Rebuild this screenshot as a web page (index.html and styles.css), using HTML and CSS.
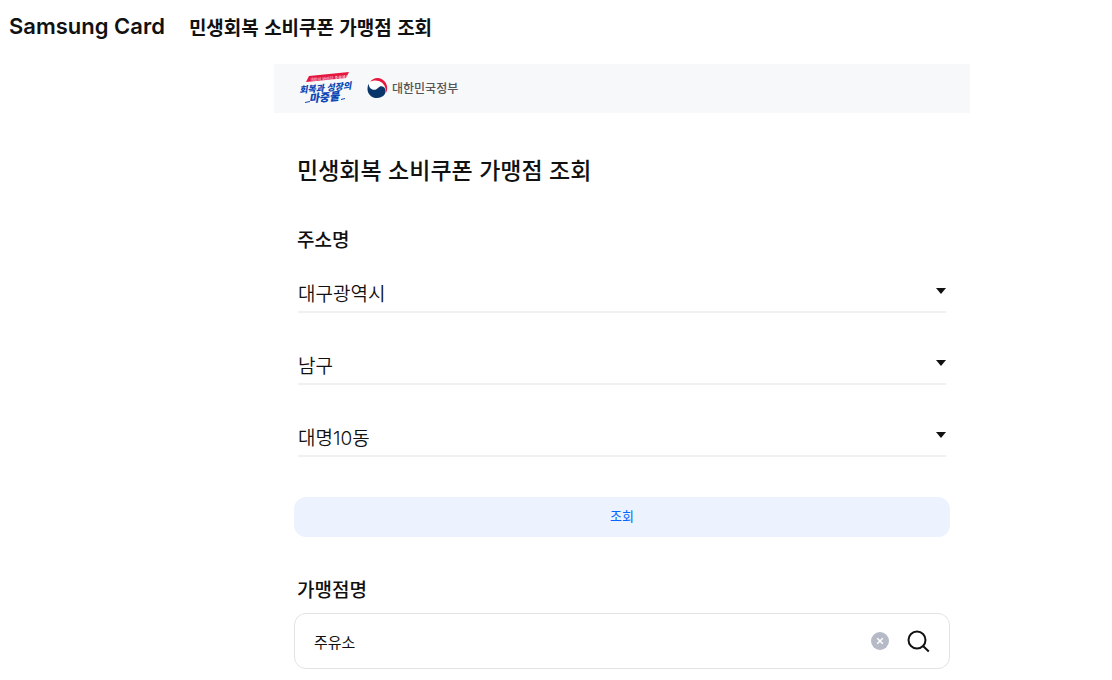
FILE: index.html
```html
<!DOCTYPE html>
<html lang="ko">
<head>
    <meta charset="UTF-8">
    <meta name="viewport" content="width=device-width, initial-scale=1.0">
    <title>민생회복 소비쿠폰 가맹점 조회</title>
    <link rel="stylesheet" href="styles.css">
</head>
<body>
    <header class="header">
        <a class="brand" href="#">Samsung Card</a>
        <h1 class="header-title">민생회복 소비쿠폰 가맹점 조회</h1>
    </header>

    <main class="container">
        <!-- 정부 로고 -->
        <div class="gov-banner">
            <svg class="slogan" width="58" height="36" viewBox="0 0 58 36">
                <path d="M11 6L51 2L48 8L8 12Z" fill="#e5173f"/>
                <g transform="rotate(-5 28 17)">
                    <text class="slogan-small" x="13" y="10">국민이 바라던 추경예산</text>
                    <text class="slogan-text" x="1" y="21">회복과 성장의</text>
                    <text class="slogan-text slogan-bottom" x="10" y="31">마중물</text>
                </g>
                <path d="M7 32.500L12 31.500M43 29.500L47 28.500" stroke="#0b47b5" stroke-width="1"/>
            </svg>
            <svg class="gov-mark" width="21" height="22" viewBox="0 0 21 22">
                <path d="M2 6C4.500 1.500 9 0 13 1.200C18.500 2.800 21.500 8 20 14C19.500 16 18.800 17.300 17.800 18.300C19.300 14 18.500 8.500 14.800 7.800C11 7.200 10.500 10.500 7.500 11.200C4 12 1.500 9.500 2 6Z" fill="#fff"/>
                <path d="M3 5C6 0.800 11 0 15 2.200C20 5 21.500 11 19 16C19.200 10 16.500 5.800 12.500 4.300C9 3 5.500 3.300 3 5Z" fill="#e5173f"/>
                <path d="M1.800 6.500C-0.300 10.500 0 15.500 3.300 18.500C7.500 22.500 14.500 21.700 17.700 17.300C19.800 13.500 18 9.500 14.500 9.300C11.500 9.300 11 12 8.500 12.700C4.500 13.600 1.500 10.500 1.800 6.500Z" fill="#08366b"/>
            </svg>
            <span class="gov-name">대한민국정부</span>
        </div>

        <form class="search-form" id="searchForm">
            <h2 class="page-title">민생회복 소비쿠폰 가맹점 조회</h2>

            <!-- 주소 선택 -->
            <label class="label" for="sido">주소명</label>
            <div class="address">
                <select class="select" id="sido" name="sido">
                    <option>대구광역시</option>
                </select>
                <select class="select" name="sigungu" aria-label="시군구">
                    <option>남구</option>
                </select>
                <select class="select" name="dong" aria-label="읍면동">
                    <option>대명10동</option>
                </select>
            </div>

            <button class="submit" type="submit">조회</button>

            <!-- 가맹점명 검색 -->
            <label class="label" for="store">가맹점명</label>
            <div class="search-box">
                <input class="search-input" type="text" id="store" name="store" value="주유소">
                <button class="icon-button" type="button" id="clear" aria-label="지우기">
                    <svg width="18" height="18" viewBox="0 0 18 18">
                        <circle cx="9" cy="9" r="9" fill="#b5bac6"/>
                        <path d="M6.200 6.200L11.800 11.800M11.800 6.200L6.200 11.800" stroke="#fff" stroke-width="1.500"/>
                    </svg>
                </button>
                <button class="icon-button" type="submit" aria-label="검색">
                    <svg width="24" height="24" viewBox="0 0 24 24" fill="none" stroke="#111" stroke-width="2">
                        <circle cx="10" cy="11" r="8.500"/>
                        <path d="M16 17L21.800 22.500"/>
                    </svg>
                </button>
            </div>
        </form>
    </main>

    <script>
        document.getElementById('searchForm').addEventListener('submit', (e) => {
            e.preventDefault();
        });

        // 검색어 지우기
        document.getElementById('clear').addEventListener('click', () => {
            document.getElementById('store').value = '';
        });
    </script>
</body>
</html>
```

FILE: styles.css
```css
* {
    box-sizing: border-box;
}

body {
    margin: 0;
    background-color: #fff;
    color: #111;
    font-family: "Noto Sans CJK KR", sans-serif;
}

button,
input,
select {
    font-family: inherit;
    color: inherit;
}

.header {
    display: flex;
    align-items: center;
    gap: 24px;
    height: 64px;
    padding: 0 9px 12px;
}

.brand {
    font-family: Inter, sans-serif;
    font-size: 22px;
    font-weight: 600;
    color: #111;
    text-decoration: none;
}

.header-title {
    margin: 0;
    font-size: 19px;
    font-weight: 700;
}

.container {
    margin: 0 142px 0 274px;
}

.gov-banner {
    display: flex;
    align-items: center;
    height: 49px;
    padding: 0 24px 2px;
    background-color: #f7f8fa;
}

.slogan-text {
    font-size: 9px;
    font-weight: 900;
    font-style: italic;
    fill: #0b47b5;
}

.slogan-bottom {
    font-size: 11px;
}

.slogan-small {
    font-size: 4px;
    font-weight: 400;
    fill: #fff;
}

.gov-mark {
    margin-left: 11px;
}

.gov-name {
    margin-left: 4px;
    font-size: 12px;
    font-weight: 500;
    color: #555;
}

.search-form {
    display: flex;
    flex-direction: column;
    padding: 38px 20px 12px;
}

.page-title {
    margin: 0 3px 38px;
    font-size: 23px;
    line-height: 36px;
    font-weight: 500;
}

.label {
    margin: 0 3px;
    font-size: 19px;
    line-height: 28px;
    font-weight: 500;
}

.address {
    display: flex;
    flex-direction: column;
    gap: 32px;
    margin: 20px 4px 40px;
}

.select {
    appearance: none;
    width: 100%;
    height: 40px;
    padding: 4px 20px 0 0;
    border: 0;
    border-bottom: 2px solid #f0f0f0;
    border-radius: 0;
    background: url("data:image/svg+xml,%3Csvg xmlns='http://www.w3.org/2000/svg' width='10' height='6'%3E%3Cpath d='M0 0h10L5 6z' fill='%23111'/%3E%3C/svg%3E") no-repeat right 15px;
    font-family: Inter, "Noto Sans CJK KR", sans-serif;
    font-size: 19px;
    font-weight: 350;
}

.submit {
    height: 40px;
    margin-bottom: 38px;
    padding: 0 0 3px;
    border: 0;
    border-radius: 12px;
    background-color: #ecf3ff;
    color: #0068ff;
    font-size: 13px;
    cursor: pointer;
}

.search-box {
    display: flex;
    align-items: center;
    gap: 18px;
    height: 56px;
    margin-top: 10px;
    padding: 0 18px 0 19px;
    border: 1px solid #e3e3e3;
    border-radius: 12px;
}

.search-input {
    flex: 1;
    min-width: 0;
    padding: 0;
    border: 0;
    outline: none;
    font-size: 15px;
}

.icon-button {
    display: flex;
    padding: 0;
    border: 0;
    background: none;
    cursor: pointer;
}
```
